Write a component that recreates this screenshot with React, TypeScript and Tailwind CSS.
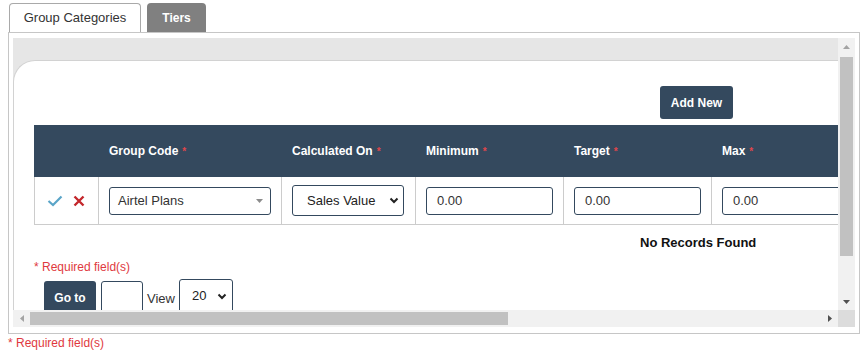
import React from "react"

const slate = "bg-[#34495e]"

function Chevron({ className = "" }: { className?: string }) {
  return (
    <svg width="10" height="7" viewBox="0 0 10 7" className={className}>
      <polyline points="1.5,1.5 5,5 8.5,1.5" fill="none" stroke="#222" strokeWidth="2" />
    </svg>
  )
}

function Tri({ dir, color }: { dir: "up" | "down" | "left" | "right"; color: string }) {
  const pts = {
    up: "0,4 7,4 3.5,0",
    down: "0,0 7,0 3.5,4",
    left: "4,0 4,7 0,3.5",
    right: "0,0 0,7 4,3.5",
  }[dir]
  const vertical = dir === "up" || dir === "down"
  return (
    <svg width={vertical ? 7 : 4} height={vertical ? 4 : 7} viewBox={vertical ? "0 0 7 4" : "0 0 4 7"}>
      <polygon points={pts} fill={color} />
    </svg>
  )
}

function HeadCell({ w, label }: { w: string; label: string }) {
  return (
    <div className={`${w} h-full flex items-center pl-[10px] shrink-0 text-[12px] font-bold text-white`}>
      {label}
      <span className="ml-[4px] text-[#e0464b] text-[10px]">*</span>
    </div>
  )
}

function NumInput() {
  return (
    <div className="w-[127px] h-[28px] border border-[#34495e] rounded-[3px] flex items-center pl-[10px] text-[13px] text-[#333]">
      0.00
    </div>
  )
}

export default function App(): JSX.Element {
  return (
    <div className="w-[862px] h-[350px] bg-white font-['Liberation_Sans',Arial,sans-serif] text-[#333] overflow-hidden">
      {/* tabs */}
      <div className="flex items-end h-[32px] pl-[9px] gap-[6px]">
        <div className="w-[132px] h-[29px] border border-b-0 border-[#a9a9a9] rounded-t-[4px] bg-white flex items-center justify-center text-[13px] text-[#333]">
          Group Categories
        </div>
        <div className="w-[59px] h-[29px] rounded-t-[4px] bg-[#808080] flex items-center justify-center text-[12px] font-bold text-white">
          Tiers
        </div>
      </div>

      {/* panel */}
      <div className="ml-[8px] w-[852px] border border-[#c6c6c6] pl-[4px] pr-[4px] pt-[5px] pb-[6px]">
        <div className="grid grid-cols-[825px_17px] grid-rows-[272px_17px]">
          <div className="overflow-hidden bg-[#e6e6e6] pt-[22px]">
            <div className="bg-white border-t border-l border-[#d2d2d2] rounded-tl-[22px] w-[1400px] h-[400px] pl-[20px] pt-[25px]">
              <button className={`${slate} ml-[626px] w-[73px] h-[33px] rounded-[3px] text-white text-[12px] font-bold`}>
                Add New
              </button>

              <div className="mt-[6px] w-[1000px]">
                <div className={`${slate} h-[52px] flex pl-[1px]`}>
                  <div className="w-[64px] shrink-0" />
                  <HeadCell w="w-[183px]" label="Group Code" />
                  <HeadCell w="w-[134px]" label="Calculated On" />
                  <HeadCell w="w-[148px]" label="Minimum" />
                  <HeadCell w="w-[148px]" label="Target" />
                  <HeadCell w="w-[148px]" label="Max" />
                </div>
                <div className="h-[48px] flex border-l border-b border-[#cccccc]">
                  <div className="w-[64px] shrink-0 border-r border-[#cccccc] flex items-center pl-[12px] gap-[10px]">
                    <svg width="16" height="12" viewBox="0 0 16 12">
                      <polyline points="1.5,6 6,10 14.5,1.5" fill="none" stroke="#5aa5c8" strokeWidth="2.2" />
                    </svg>
                    <svg width="12" height="12" viewBox="0 0 12 12">
                      <path d="M1.5 1.5 L10.5 10.5 M10.5 1.5 L1.5 10.5" stroke="#c3272c" strokeWidth="2.4" />
                    </svg>
                  </div>
                  <div className="w-[183px] shrink-0 border-r border-[#cccccc] flex items-center pl-[10px]">
                    <div className="w-[162px] h-[28px] border border-[#34495e] rounded-[3px] flex items-center justify-between pl-[8px] pr-[7px] text-[13px] text-[#333]">
                      Airtel Plans
                      <Tri dir="down" color="#8c8c8c" />
                    </div>
                  </div>
                  <div className="w-[134px] shrink-0 border-r border-[#cccccc] flex items-center pl-[10px]">
                    <div className="w-[112px] h-[31px] border border-[#34495e] rounded-[3px] flex items-center justify-between pl-[14px] pr-[4px] text-[13px] text-[#222]">
                      Sales Value
                      <Chevron />
                    </div>
                  </div>
                  <div className="w-[148px] shrink-0 border-r border-[#cccccc] flex items-center pl-[10px]">
                    <NumInput />
                  </div>
                  <div className="w-[148px] shrink-0 border-r border-[#cccccc] flex items-center pl-[10px]">
                    <NumInput />
                  </div>
                  <div className="w-[148px] shrink-0 border-r border-[#cccccc] flex items-center pl-[10px]">
                    <NumInput />
                  </div>
                </div>
              </div>

              <p className="mt-[10px] ml-[606px] text-[13px] leading-[15px] font-bold text-[#111]">No Records Found</p>

              <p className="mt-[10px] text-[12px] leading-[14px] text-[#e0393e]">* Required field(s)</p>

              <div className="mt-[5px] ml-[10px] flex items-start">
                <button className={`${slate} mt-[2px] w-[52px] h-[34px] rounded-[3px] text-white text-[12px] font-bold`}>
                  Go to
                </button>
                <div className="mt-[2px] ml-[5px] w-[42px] h-[32px] border border-[#34495e] rounded-[3px] bg-white" />
                <span className="mt-[10px] ml-[4px] text-[13px] text-[#333]">View</span>
                <div className="ml-[4px] w-[54px] h-[34px] border border-[#34495e] rounded-[3px] flex items-center justify-between pl-[12px] pr-[5px] text-[13px] text-[#222]">
                  20
                  <Chevron />
                </div>
              </div>
            </div>
          </div>

          {/* vertical scrollbar */}
          <div className="bg-[#f1f1f1] flex flex-col items-center">
            <div className="h-[17px] flex items-center justify-center">
              <Tri dir="up" color="#a3a3a3" />
            </div>
            <div className="mt-[2px] w-[13px] h-[199px] bg-[#c1c1c1]" />
            <div className="mt-auto h-[17px] flex items-center justify-center">
              <Tri dir="down" color="#505050" />
            </div>
          </div>

          {/* horizontal scrollbar */}
          <div className="bg-[#f1f1f1] flex items-center">
            <div className="w-[17px] flex justify-center">
              <Tri dir="left" color="#a3a3a3" />
            </div>
            <div className="w-[478px] h-[13px] bg-[#c1c1c1]" />
            <div className="ml-auto w-[17px] flex justify-center">
              <Tri dir="right" color="#505050" />
            </div>
          </div>
          <div className="bg-[#dcdcdc]" />
        </div>
      </div>

      <p className="ml-[8px] mt-[2px] text-[12px] leading-[14px] text-[#e0393e]">* Required field(s)</p>
    </div>
  )
}
